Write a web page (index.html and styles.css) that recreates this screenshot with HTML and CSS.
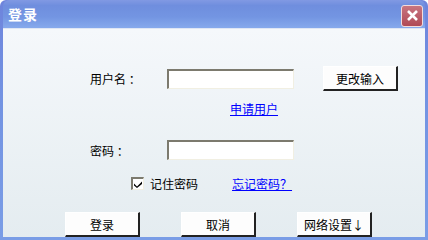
FILE: index.html
```html
<!DOCTYPE html>
<html lang="zh-CN">
<head>
    <meta charset="UTF-8">
    <title>登录</title>
    <link rel="stylesheet" href="styles.css">
</head>
<body>
    <div class="window">
        <div class="titlebar">
            <span class="title">登录</span>
            <span class="close-btn">
                <svg width="13" height="13" viewBox="0 0 13 13"><path d="M2 2 L11 11 M11 2 L2 11" stroke="#fff" stroke-width="2.6"/></svg>
            </span>
        </div>
        <div class="content">
            <div class="form">
                <div class="row row-user">
                    <label class="label">用户名 ：</label>
                    <input class="field" type="text">
                    <button class="btn btn-change">更改输入</button>
                </div>
                <div class="row row-link">
                    <a href="#" class="link">申请用户</a>
                </div>
                <div class="row row-pass">
                    <label class="label">密码 ：</label>
                    <input class="field" type="password">
                </div>
                <div class="row row-remember">
                    <span class="check">
                        <svg width="8" height="8" viewBox="0 0 8 8"><path d="M0 3.5 L3 6.5 L8 1.5 L8 4 L3 8 L0 5.5 Z" fill="#000"/></svg>
                    </span>
                    <span class="check-label">记住密码</span>
                    <a href="#" class="link forgot">忘记密码？</a>
                </div>
            </div>
            <!-- przyciski na dole -->
            <div class="actions">
                <button class="btn">登录</button>
                <button class="btn">取消</button>
                <button class="btn">网络设置↓</button>
            </div>
        </div>
    </div>
</body>
</html>
```

FILE: styles.css
```css
body {
    margin: 0;
    font-family: "Noto Sans CJK SC", "DejaVu Sans", sans-serif;
    font-size: 12px;
    color: #000;
}
.window {
    width: 428px;
    height: 240px;
    box-sizing: border-box;
    border-radius: 6px 6px 0 0;
    padding: 0 3px 3px 3px;
    display: flex;
    flex-direction: column;
    background: linear-gradient(to bottom, #6e84dc 0%, #7393e2 40%, #7a9de6 100%);
}
.titlebar {
    height: 29px;
    display: flex;
    align-items: center;
    justify-content: space-between;
    padding: 0 2px 0 5px;
    border-radius: 6px 6px 0 0;
    background: linear-gradient(to bottom, #8199e3 0%, #6f8ede 20%, #7395e2 60%, #86a9ec 100%);
}
.title {
    color: #fff;
    font-weight: bold;
    font-size: 14px;
    letter-spacing: 1px;
}
.close-btn {
    width: 20px;
    height: 20px;
    border: 1px solid #f3dcdc;
    border-radius: 3px;
    background: linear-gradient(to bottom, #c87580, #b04a57);
    display: flex;
    align-items: center;
    justify-content: center;
    margin-top: 3px;
}
.content {
    flex: 1;
    background: linear-gradient(to bottom, #f5f8fb 0%, #e4ecf0 100%);
    border-top: 1px solid #dfe6f4;
}
.form {
    padding: 37px 0 0 87px;
}
.row {
    display: flex;
    align-items: center;
}
.row-user {
    height: 25px;
}
.label {
    width: 77px;
}
.field {
    box-sizing: border-box;
    width: 127px;
    height: 20px;
    margin: 0;
    border-top: 2px solid #7c7a6e;
    border-left: 2px solid #7c7a6e;
    border-right: 1px solid #f1efe2;
    border-bottom: 1px solid #f1efe2;
    background: #fff;
}
.btn {
    box-sizing: border-box;
    width: 75px;
    height: 25px;
    padding: 0;
    font-family: inherit;
    font-size: 12px;
    color: #000;
    background: #fdfdfd;
    border-top: 1px solid #fff;
    border-left: 1px solid #fff;
    border-right: 2px solid #222;
    border-bottom: 2px solid #222;
}
.btn-change {
    margin-left: 29px;
}
.row-link {
    height: 14px;
    margin-top: 10px;
    padding-left: 140px;
}
.link {
    color: #0000ff;
    text-decoration: underline;
}
.row-pass {
    height: 20px;
    margin-top: 25px;
}
.row-remember {
    height: 14px;
    margin-top: 16px;
    padding-left: 41px;
}
.check {
    box-sizing: border-box;
    width: 13px;
    height: 13px;
    border-top: 2px solid #7c7a6e;
    border-left: 2px solid #7c7a6e;
    border-right: 1px solid #f1efe2;
    border-bottom: 1px solid #f1efe2;
    background: #fff;
    display: flex;
    align-items: center;
    justify-content: center;
}
.check-label {
    margin-left: 6px;
}
.forgot {
    margin-left: 34px;
}
.actions {
    display: flex;
    gap: 41px;
    padding-left: 62px;
    margin-top: 22px;
}
```
